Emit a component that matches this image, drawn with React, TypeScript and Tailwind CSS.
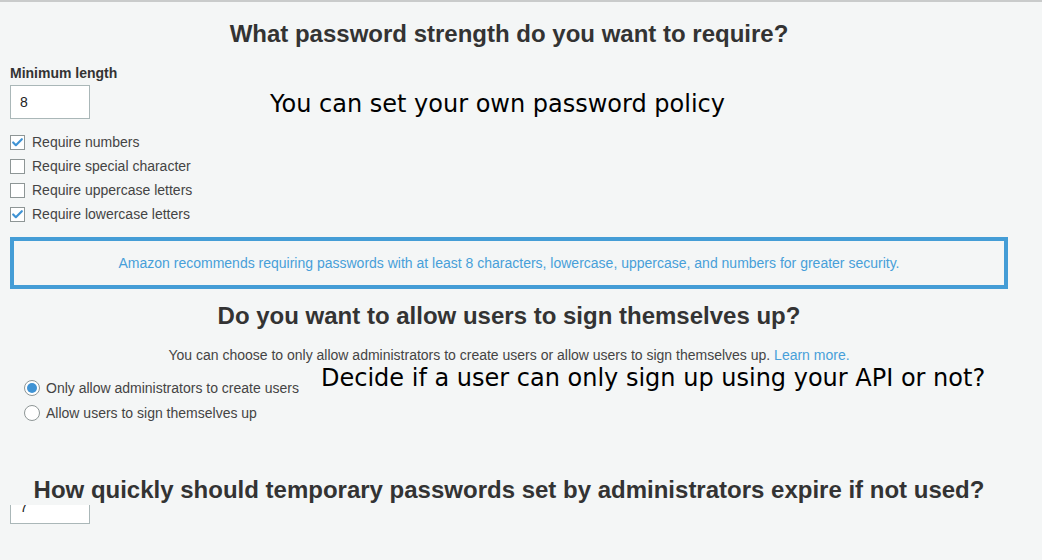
import { Check } from "lucide-react";

const checks = [
  { label: "Require numbers", checked: true },
  { label: "Require special character", checked: false },
  { label: "Require uppercase letters", checked: false },
  { label: "Require lowercase letters", checked: true },
];

const radios = [
  { label: "Only allow administrators to create users", checked: true },
  { label: "Allow users to sign themselves up", checked: false },
];

const App = () => {
  return (
    <div className="relative h-[560px] w-[1042px] overflow-hidden border-t-2 border-[#c9cbcb] bg-[#f4f6f6] font-['Liberation_Sans',Arial,sans-serif] text-[#444]">
      <div className="w-[998px] ml-[10px]">
        {/* password strength */}
        <h2 className="pt-[18px] text-center text-[24px] font-bold leading-[28px] text-[#333]">
          What password strength do you want to require?
        </h2>
        <div className="mt-[17px] text-[14px] font-bold leading-[16px] text-[#333]">Minimum length</div>
        <div className="mt-[4px] flex h-[34px] w-[80px] items-center border border-[#aab7b8] bg-white px-[9px] text-[14px] text-[#222]">
          8
        </div>
        <div className="mt-[16px] flex flex-col gap-[10px]">
          {checks.map((c) => (
            <div key={c.label} className="flex h-[14px] items-center gap-[7px]">
              <span className="flex h-[15px] w-[15px] items-center justify-center border border-[#8e9696] bg-white">
                {c.checked && <Check size={13} strokeWidth={4} className="text-[#3f93d4]" />}
              </span>
              <span className="text-[14px] leading-[14px] text-[#444]">{c.label}</span>
            </div>
          ))}
        </div>
        <div className="mt-[16px] flex h-[52px] items-center justify-center border-4 border-[#449dd6] text-[14px] text-[#479fd9]">
          Amazon recommends requiring passwords with at least 8 characters, lowercase, uppercase, and numbers for greater security.
        </div>

        {/* sign up */}
        <h2 className="mt-[13px] text-center text-[24px] font-bold leading-[28px] text-[#333]">
          Do you want to allow users to sign themselves up?
        </h2>
        <p className="mt-[17px] text-center text-[14px] leading-[16px] text-[#444]">
          You can choose to only allow administrators to create users or allow users to sign themselves up.{" "}
          <span className="text-[#479fd9]">Learn more.</span>
        </p>
        <div className="ml-[14px] mt-[17px] flex flex-col gap-[9px]">
          {radios.map((r) => (
            <div key={r.label} className="flex h-[16px] items-center gap-[6px]">
              <span className="flex h-[16px] w-[16px] items-center justify-center rounded-full border border-[#8e9696] bg-white">
                {r.checked && <span className="h-[10px] w-[10px] rounded-full bg-[#3f93d4]" />}
              </span>
              <span className="text-[14px] leading-[14px] text-[#444]">{r.label}</span>
            </div>
          ))}
        </div>

        {/* expiry */}
        <h2 className="relative z-10 mt-[54px] bg-[#f4f6f6] text-center text-[24px] font-bold leading-[30px] text-[#333]">
          How quickly should temporary passwords set by administrators expire if not used?
        </h2>
        <div className="-mt-[15px] flex h-[34px] w-[80px] items-center border border-[#aab7b8] bg-white px-[9px] text-[14px] text-[#222]">
          7
        </div>
      </div>

      {/* annotations */}
      <div className="absolute left-[270px] top-[87px] font-['DejaVu_Sans',sans-serif] text-[24px] leading-[30px] text-black">
        You can set your own password policy
      </div>
      <div className="absolute left-[321px] top-[361px] font-['DejaVu_Sans',sans-serif] text-[24px] leading-[30px] text-black">
        Decide if a user can only sign up using your API or not?
      </div>
    </div>
  );
};

export default App;
